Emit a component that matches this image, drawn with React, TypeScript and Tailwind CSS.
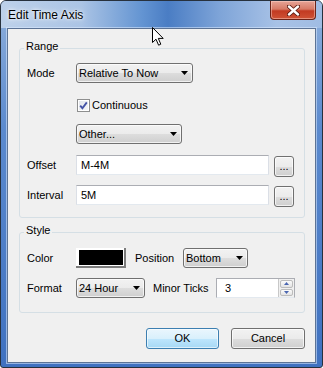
import type { ReactNode } from "react"

/** Win7-ish control styles */
const grayBtn =
  "rounded-[3px] border border-[#707070] bg-[linear-gradient(180deg,#f2f2f2_0%,#ebebeb_50%,#dddddd_51%,#cfcfcf_100%)] shadow-[inset_0_0_0_1px_rgba(255,255,255,0.7)]"
const textBox =
  "h-[20px] flex items-center bg-white border border-[#abadb3] border-l-[#dbdfe6] border-r-[#dbdfe6] border-b-[#e3e9ef] pl-[4px]"

function Combo({ value, className }: { value: string; className: string }) {
  return (
    <div className={`${className} ${grayBtn} h-[20px] flex items-center pl-[2px] pr-[4px]`}>
      <span className="min-w-0 flex-1 truncate">{value}</span>
      <svg width="7" height="4" viewBox="0 0 7 4" className="shrink-0">
        <path d="M0 0h7L3.5 4z" fill="#000" />
      </svg>
    </div>
  )
}

function Group({ title, className, children }: { title: string; className: string; children: ReactNode }) {
  return (
    <div className={`ml-[11px] w-[286px] rounded-[3px] border border-[#d5dfe5] pl-[7px] ${className}`}>
      <div className="-mt-[9px] -ml-[3px] w-fit bg-[#f0f0f0] px-[2px] leading-[13px]">{title}</div>
      {children}
    </div>
  )
}

function DotsButton() {
  return (
    <div className={`${grayBtn} mt-px ml-[5px] flex h-[21px] w-[20px] items-center justify-center leading-none`}>
      ...
    </div>
  )
}

export default function App() {
  return (
    <div className="relative flex h-[368px] w-[323px] flex-col overflow-hidden rounded-t-[6px] rounded-b-[3px] border border-[#27313d] bg-[linear-gradient(180deg,#8fb0dc_0%,#5b8ace_35%,#3f71c0_100%)] font-['Liberation_Sans',Arial,sans-serif] text-[11px] text-black">
      {/* title bar */}
      <div className="flex h-[27px] shrink-0 items-start bg-[linear-gradient(90deg,#bdd1ea_0%,#abc4e5_25%,#6394d2_44%,#4a7dc4_52%,#7ea4d8_68%,#a8c2e6_86%,#a0bce3_100%)]">
        <span className="mt-[7px] pl-[7px] text-[12px] leading-[15px] [text-shadow:0_0_6px_#fff,0_0_3px_#fff]">
          Edit Time Axis
        </span>
        <div className="ml-auto mr-[6px] flex h-[19px] w-[46px] items-center justify-center rounded-b-[4px] border border-t-0 border-[#6b2318] bg-[linear-gradient(180deg,#e6a497_0%,#d77a66_45%,#c23a22_55%,#cf5235_100%)] shadow-[inset_0_0_0_1px_rgba(255,220,210,0.45)]">
          <svg width="13" height="11" viewBox="0 0 13 11">
            <path d="M2 1.5l9 8M11 1.5l-9 8" stroke="#5a1a10" strokeWidth="4.2" strokeLinecap="round" />
            <path d="M2 1.5l9 8M11 1.5l-9 8" stroke="#fff" strokeWidth="2.4" strokeLinecap="round" />
          </svg>
        </div>
      </div>

      {/* client area */}
      <div className="mx-[6px] mb-[4px] flex-1 border border-[#5c7395] bg-[#f0f0f0] shadow-[0_0_0_1px_rgba(220,235,255,0.55)]">
        <Group title="Range" className="mt-[19px] pb-[10px]">
          <div className="mt-[10px] flex h-[20px] items-center">
            <span className="w-[49px]">Mode</span>
            <Combo value="Relative To Now" className="w-[117px]" />
          </div>
          <div className="mt-[14px] ml-[50px] flex h-[16px] items-center gap-[2px]">
            <div className="flex h-[13px] w-[13px] items-center justify-center border border-[#8e8f8f] bg-[linear-gradient(135deg,#dfe3ea_0%,#f6f7f9_100%)] shadow-[inset_0_0_0_1px_#fff]">
              <svg width="9" height="9" viewBox="0 0 9 9">
                <path d="M1.2 4.6L3.4 7.2L7.8 1.4" stroke="#4453a6" strokeWidth="1.9" fill="none" />
              </svg>
            </div>
            <span>Continuous</span>
          </div>
          <div className="mt-[11px] ml-[49px] flex h-[20px] items-center">
            <Combo value="Other..." className="w-[106px]" />
          </div>
          <div className="mt-[11px] flex items-start">
            <span className="flex h-[20px] w-[49px] items-center">Offset</span>
            <div className={`${textBox} w-[193px]`}>M-4M</div>
            <DotsButton />
          </div>
          <div className="mt-[8px] flex items-start">
            <span className="flex h-[20px] w-[49px] items-center">Interval</span>
            <div className={`${textBox} w-[193px] border-[#7da2ce] border-l-[#b5cbe6] border-r-[#b5cbe6] border-b-[#c5d8ee]`}>5M</div>
            <DotsButton />
          </div>
        </Group>

        <Group title="Style" className="mt-[14px] pb-[14px]">
          <div className="mt-[11px] flex h-[20px] items-center">
            <span className="w-[49px]">Color</span>
            <div className="h-[20px] w-[50px] border-r-2 border-b-2 border-[#7c7c7c] bg-white pt-[2px] pr-px pb-px pl-[3px]">
              <div className="h-full w-full bg-black" />
            </div>
            <span className="ml-[9px] w-[48px]">Position</span>
            <Combo value="Bottom" className="w-[65px]" />
          </div>
          <div className="mt-[10px] flex h-[20px] items-center">
            <span className="w-[49px]">Format</span>
            <Combo value="24 Hour" className="w-[69px]" />
            <span className="ml-[8px] w-[63px]">Minor Ticks</span>
            <div className="flex h-[20px] w-[79px] items-center border border-[#abadb3] border-b-[#e3e9ef] bg-white">
              <span className="flex-1 pl-[8px]">3</span>
              <div className="flex h-full w-[16px] flex-col gap-px border-l border-[#c8c8c8] bg-[#f0f0f0] p-px">
                <div className="flex flex-1 items-center justify-center rounded-[2px] border border-[#bcbcbc] bg-[linear-gradient(180deg,#fbfbfb,#e3e3e3)]">
                  <svg width="5" height="3" viewBox="0 0 5 3">
                    <path d="M0 3h5L2.5 0z" fill="#4a66b0" />
                  </svg>
                </div>
                <div className="flex flex-1 items-center justify-center rounded-[2px] border border-[#bcbcbc] bg-[linear-gradient(180deg,#fbfbfb,#e3e3e3)]">
                  <svg width="5" height="3" viewBox="0 0 5 3">
                    <path d="M0 0h5L2.5 3z" fill="#4a66b0" />
                  </svg>
                </div>
              </div>
            </div>
          </div>
        </Group>

        <div className="mt-[15px] flex justify-end gap-[12px] pr-[10px]">
          <div className="flex h-[21px] w-[73px] items-center justify-center rounded-[3px] border border-[#3c7fb1] bg-[linear-gradient(180deg,#eaf6fd_0%,#d9f0fc_50%,#bee6fd_51%,#a7d9f5_100%)] shadow-[inset_0_0_0_1px_rgba(255,255,255,0.6)]">
            OK
          </div>
          <div className={`${grayBtn} flex h-[21px] w-[74px] items-center justify-center`}>Cancel</div>
        </div>
      </div>

      {/* mouse pointer over the title bar */}
      <svg width="13" height="20" viewBox="0 0 13 20" className="absolute left-[151px] top-[26px]">
        <path d="M0.5 0.5V15.5L4 12.2L6.6 18.2L8.8 17.2L6.3 11.4H11.2Z" fill="#fff" stroke="#000" strokeWidth="1" strokeLinejoin="round" />
      </svg>
    </div>
  )
}
